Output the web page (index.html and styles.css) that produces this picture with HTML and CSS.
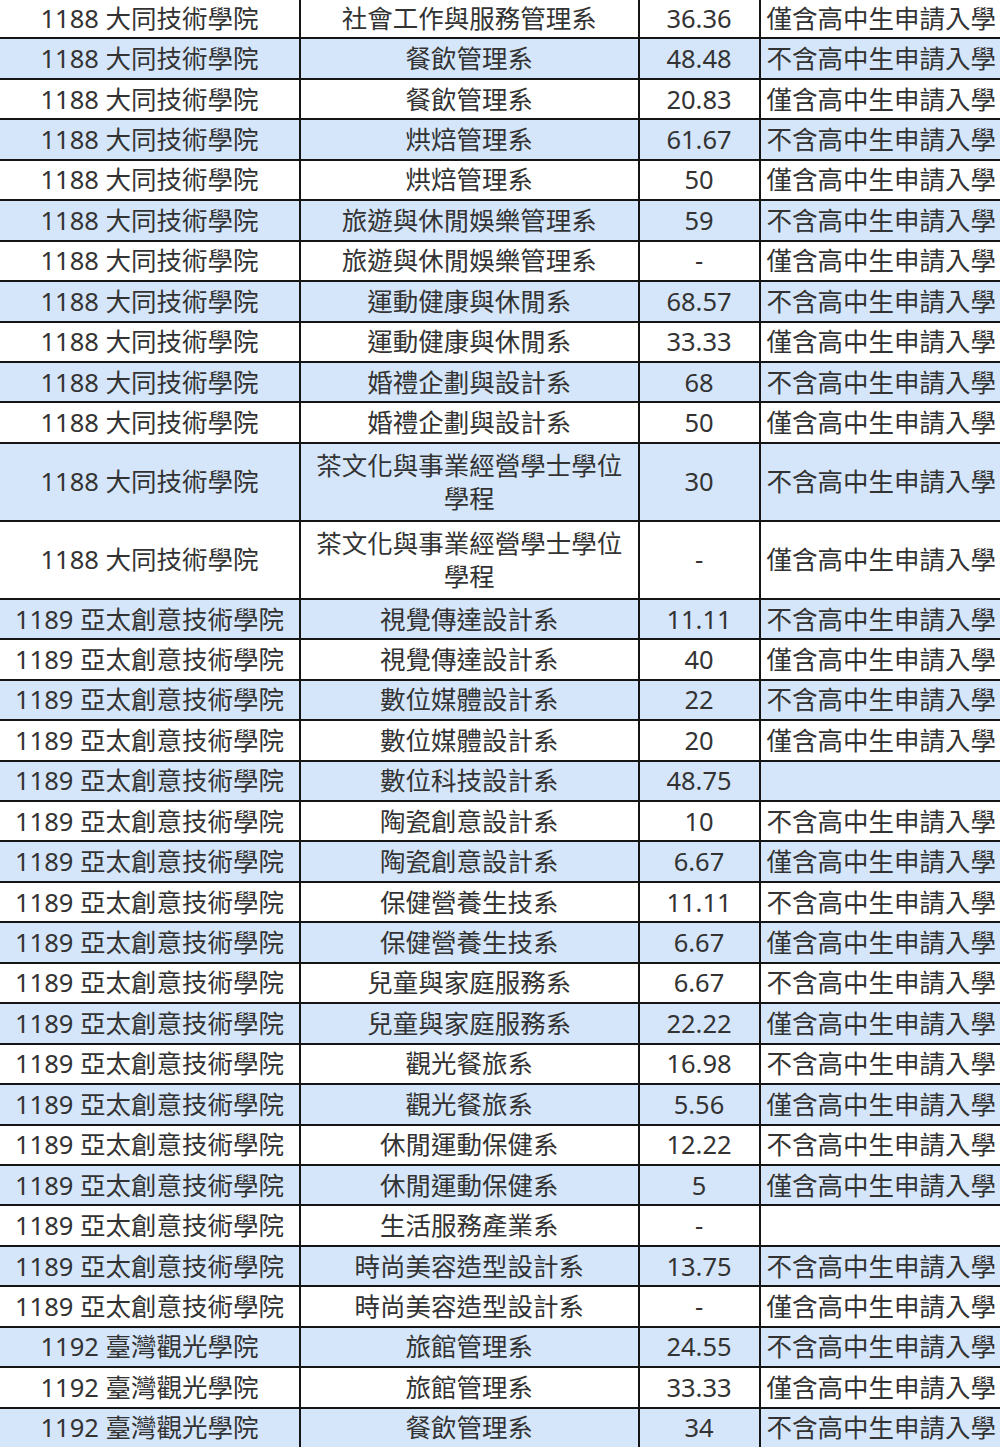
FILE: index.html
```html
<!DOCTYPE html>
<html lang="zh-Hant">
<head>
<meta charset="utf-8">
<title>錄取率</title>
<link rel="stylesheet" href="styles.css">
</head>
<body>
<table class="sheet">
<colgroup><col class="c-school"><col class="c-dept"><col class="c-rate"><col class="c-note"></colgroup>
<tbody>
<tr><td class="school">1188 大同技術學院</td><td class="dept">社會工作與服務管理系</td><td class="rate">36.36</td><td class="note">僅含高中生申請入學</td></tr>
<tr class="alt"><td class="school">1188 大同技術學院</td><td class="dept">餐飲管理系</td><td class="rate">48.48</td><td class="note">不含高中生申請入學</td></tr>
<tr><td class="school">1188 大同技術學院</td><td class="dept">餐飲管理系</td><td class="rate">20.83</td><td class="note">僅含高中生申請入學</td></tr>
<tr class="alt"><td class="school">1188 大同技術學院</td><td class="dept">烘焙管理系</td><td class="rate">61.67</td><td class="note">不含高中生申請入學</td></tr>
<tr><td class="school">1188 大同技術學院</td><td class="dept">烘焙管理系</td><td class="rate">50</td><td class="note">僅含高中生申請入學</td></tr>
<tr class="alt"><td class="school">1188 大同技術學院</td><td class="dept">旅遊與休閒娛樂管理系</td><td class="rate">59</td><td class="note">不含高中生申請入學</td></tr>
<tr><td class="school">1188 大同技術學院</td><td class="dept">旅遊與休閒娛樂管理系</td><td class="rate">-</td><td class="note">僅含高中生申請入學</td></tr>
<tr class="alt"><td class="school">1188 大同技術學院</td><td class="dept">運動健康與休閒系</td><td class="rate">68.57</td><td class="note">不含高中生申請入學</td></tr>
<tr><td class="school">1188 大同技術學院</td><td class="dept">運動健康與休閒系</td><td class="rate">33.33</td><td class="note">僅含高中生申請入學</td></tr>
<tr class="alt"><td class="school">1188 大同技術學院</td><td class="dept">婚禮企劃與設計系</td><td class="rate">68</td><td class="note">不含高中生申請入學</td></tr>
<tr><td class="school">1188 大同技術學院</td><td class="dept">婚禮企劃與設計系</td><td class="rate">50</td><td class="note">僅含高中生申請入學</td></tr>
<tr class="alt tall"><td class="school">1188 大同技術學院</td><td class="dept">茶文化與事業經營學士學位學程</td><td class="rate">30</td><td class="note">不含高中生申請入學</td></tr>
<tr class="tall"><td class="school">1188 大同技術學院</td><td class="dept">茶文化與事業經營學士學位學程</td><td class="rate">-</td><td class="note">僅含高中生申請入學</td></tr>
<tr class="alt"><td class="school">1189 亞太創意技術學院</td><td class="dept">視覺傳達設計系</td><td class="rate">11.11</td><td class="note">不含高中生申請入學</td></tr>
<tr><td class="school">1189 亞太創意技術學院</td><td class="dept">視覺傳達設計系</td><td class="rate">40</td><td class="note">僅含高中生申請入學</td></tr>
<tr class="alt"><td class="school">1189 亞太創意技術學院</td><td class="dept">數位媒體設計系</td><td class="rate">22</td><td class="note">不含高中生申請入學</td></tr>
<tr><td class="school">1189 亞太創意技術學院</td><td class="dept">數位媒體設計系</td><td class="rate">20</td><td class="note">僅含高中生申請入學</td></tr>
<tr class="alt"><td class="school">1189 亞太創意技術學院</td><td class="dept">數位科技設計系</td><td class="rate">48.75</td><td class="note"></td></tr>
<tr><td class="school">1189 亞太創意技術學院</td><td class="dept">陶瓷創意設計系</td><td class="rate">10</td><td class="note">不含高中生申請入學</td></tr>
<tr class="alt"><td class="school">1189 亞太創意技術學院</td><td class="dept">陶瓷創意設計系</td><td class="rate">6.67</td><td class="note">僅含高中生申請入學</td></tr>
<tr><td class="school">1189 亞太創意技術學院</td><td class="dept">保健營養生技系</td><td class="rate">11.11</td><td class="note">不含高中生申請入學</td></tr>
<tr class="alt"><td class="school">1189 亞太創意技術學院</td><td class="dept">保健營養生技系</td><td class="rate">6.67</td><td class="note">僅含高中生申請入學</td></tr>
<tr><td class="school">1189 亞太創意技術學院</td><td class="dept">兒童與家庭服務系</td><td class="rate">6.67</td><td class="note">不含高中生申請入學</td></tr>
<tr class="alt"><td class="school">1189 亞太創意技術學院</td><td class="dept">兒童與家庭服務系</td><td class="rate">22.22</td><td class="note">僅含高中生申請入學</td></tr>
<tr><td class="school">1189 亞太創意技術學院</td><td class="dept">觀光餐旅系</td><td class="rate">16.98</td><td class="note">不含高中生申請入學</td></tr>
<tr class="alt"><td class="school">1189 亞太創意技術學院</td><td class="dept">觀光餐旅系</td><td class="rate">5.56</td><td class="note">僅含高中生申請入學</td></tr>
<tr><td class="school">1189 亞太創意技術學院</td><td class="dept">休閒運動保健系</td><td class="rate">12.22</td><td class="note">不含高中生申請入學</td></tr>
<tr class="alt"><td class="school">1189 亞太創意技術學院</td><td class="dept">休閒運動保健系</td><td class="rate">5</td><td class="note">僅含高中生申請入學</td></tr>
<tr><td class="school">1189 亞太創意技術學院</td><td class="dept">生活服務產業系</td><td class="rate">-</td><td class="note"></td></tr>
<tr class="alt"><td class="school">1189 亞太創意技術學院</td><td class="dept">時尚美容造型設計系</td><td class="rate">13.75</td><td class="note">不含高中生申請入學</td></tr>
<tr><td class="school">1189 亞太創意技術學院</td><td class="dept">時尚美容造型設計系</td><td class="rate">-</td><td class="note">僅含高中生申請入學</td></tr>
<tr class="alt"><td class="school">1192 臺灣觀光學院</td><td class="dept">旅館管理系</td><td class="rate">24.55</td><td class="note">不含高中生申請入學</td></tr>
<tr><td class="school">1192 臺灣觀光學院</td><td class="dept">旅館管理系</td><td class="rate">33.33</td><td class="note">僅含高中生申請入學</td></tr>
<tr class="alt"><td class="school">1192 臺灣觀光學院</td><td class="dept">餐飲管理系</td><td class="rate">34</td><td class="note">不含高中生申請入學</td></tr>
</tbody>
</table>
</body>
</html>
```
FILE: styles.css
```css
html, body {
  margin: 0;
  padding: 0;
  background: #ffffff;
  overflow: hidden;
}

.sheet {
  border-collapse: collapse;
  table-layout: fixed;
  width: 1005px;
  margin: -3px 0 0 -2px;
  font-family: "Noto Sans", "Noto Sans CJK TC", sans-serif;
  font-size: 25.5px;
  color: #333333;
}

.c-school { width: 301px; }
.c-dept { width: 338.5px; }
.c-rate { width: 121px; }
.c-note { width: 244.5px; }

.sheet tr {
  height: 40.45px;
  background: #ffffff;
}

.sheet tr.alt {
  background: #d5e6fb;
}

.sheet tr.tall {
  height: 78px;
}

.sheet td {
  border: 2px solid #151515;
  padding: 0;
  line-height: 33px;
  vertical-align: middle;
  white-space: nowrap;
  overflow: hidden;
}

.school,
.rate {
  text-align: center;
}

.dept {
  text-align: center;
}

.sheet td.dept {
  white-space: normal;
  padding: 0 10px;
}

.note {
  text-align: left;
}

.sheet td.note {
  padding-left: 6px;
}
```
